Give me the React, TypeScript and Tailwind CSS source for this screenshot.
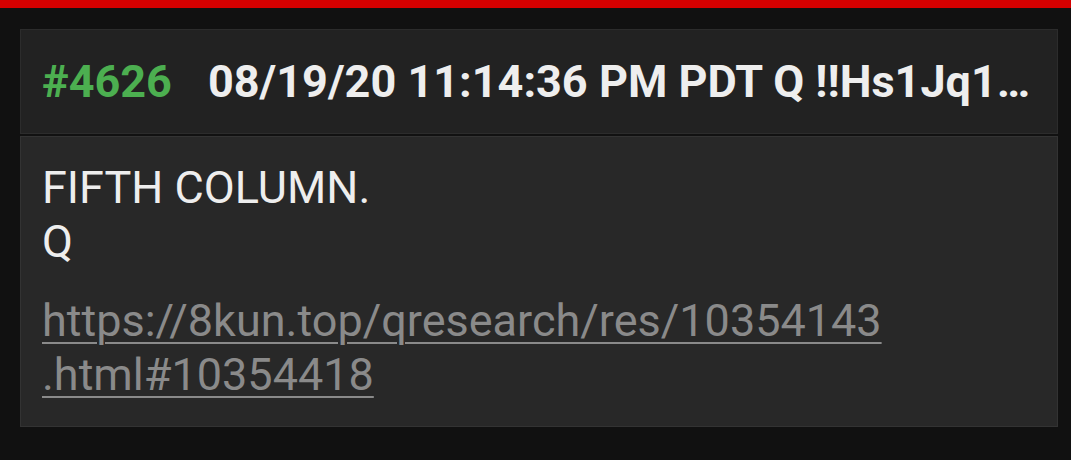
export default function App() {
  return (
    <div className="w-[1071px] h-[460px] bg-[#111111] flex flex-col overflow-hidden" style={{ fontFamily: 'Roboto, "Noto Sans", sans-serif' }}>
      <div className="h-[8px] bg-[#d40000] shrink-0" />
      <div className="flex-1 pl-[20px] pr-[13px] pt-[21px]">
        <div className="h-[105px] bg-[#222222] border border-[#2c2c2c] flex items-center px-[21px] gap-[36px]">
          <span className="text-[#4caf50] font-bold text-[45px] leading-none shrink-0">#4626</span>
          <span className="text-[#eeeeee] font-bold text-[45px] leading-none whitespace-nowrap">
            08/19/20 11:14:36 PM PDT Q !!Hs1Jq1…
          </span>
        </div>
        <div className="mt-[2px] h-[291px] bg-[#282828] border border-[#333333] px-[21px] pt-[24px]">
          <p className="text-[#eeeeee] text-[45px] leading-[54px]">
            FIFTH COLUMN.
            <br />
            Q
          </p>
          <a className="block mt-[25px] text-[#8a8a8a] text-[45px] leading-[54px] underline underline-offset-[6px] decoration-[2px]" href="#">
            https://8kun.top/qresearch/res/10354143
            <br />
            .html#10354418
          </a>
        </div>
      </div>
    </div>
  );
}
